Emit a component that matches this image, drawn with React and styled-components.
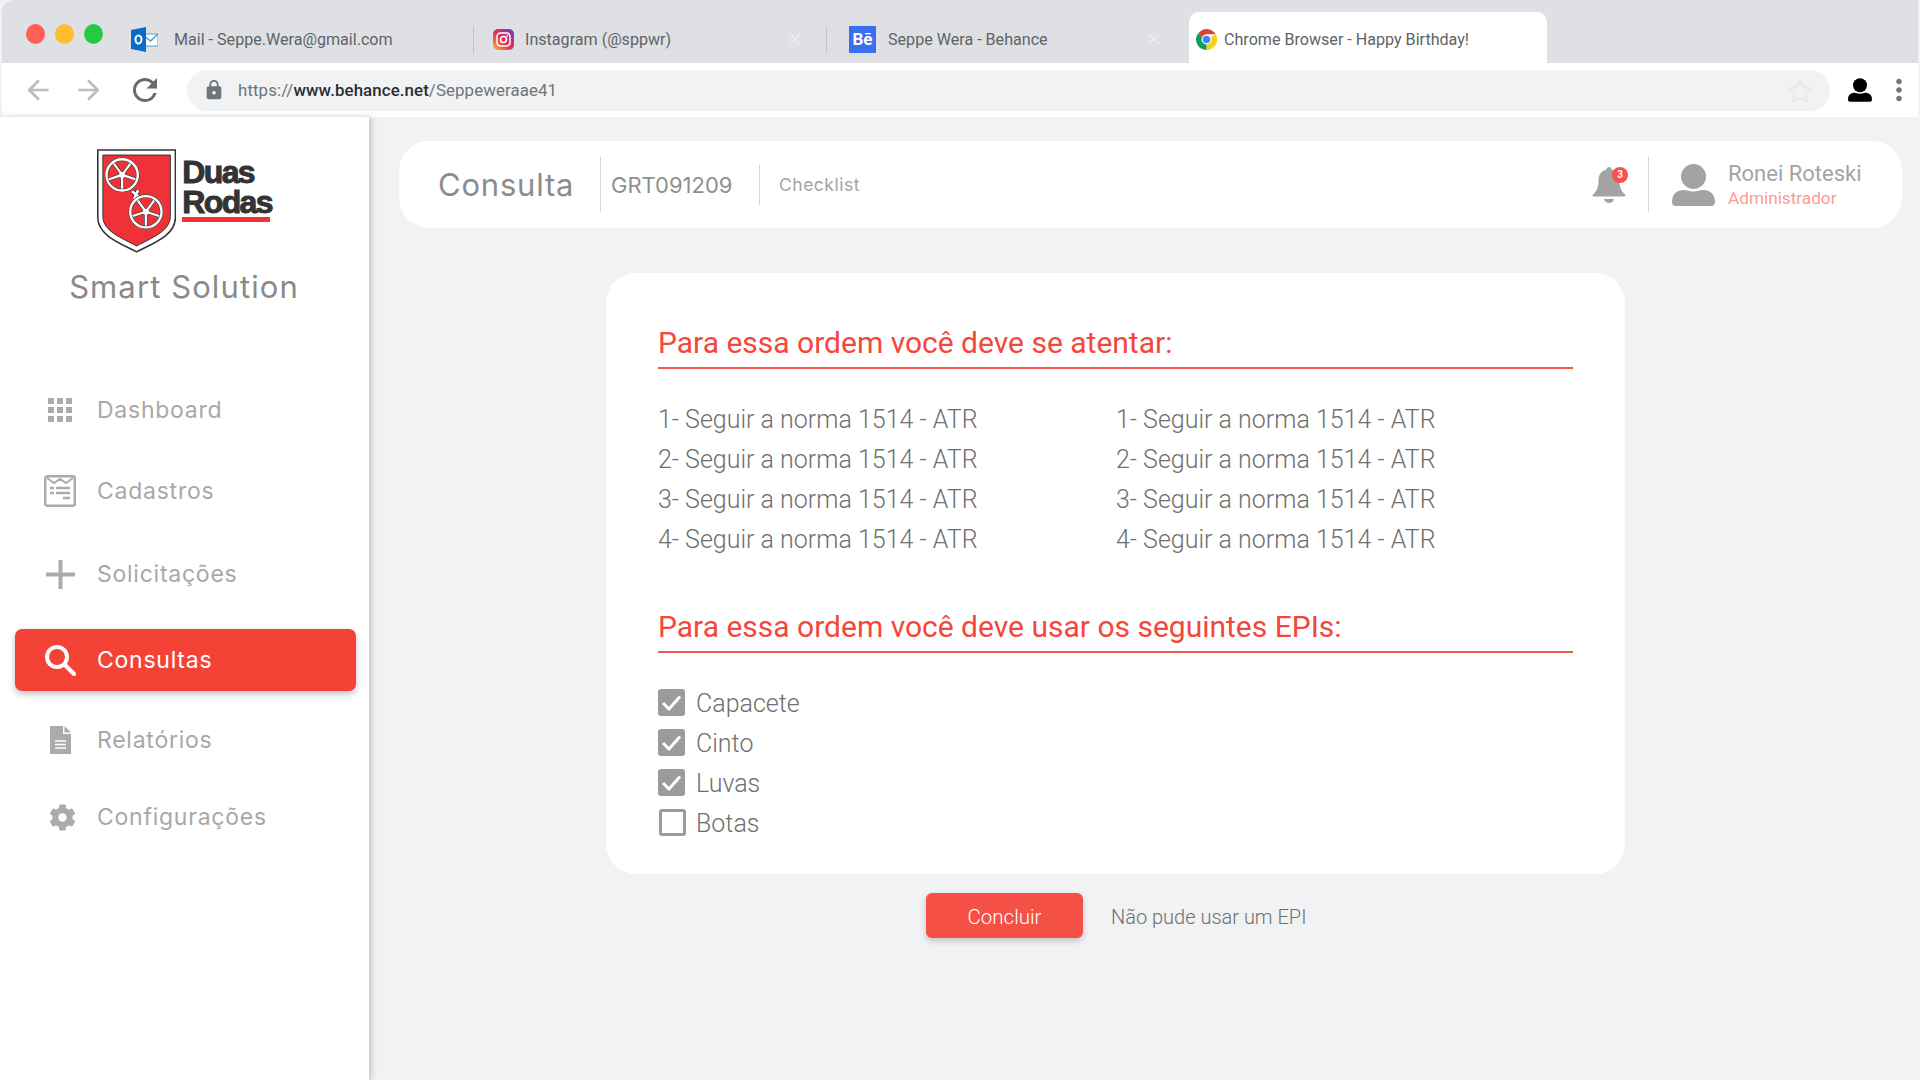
import React from "react";
import styled, { createGlobalStyle } from "styled-components";
import { MdArrowBack, MdArrowForward, MdRefresh, MdLock, MdClose, MdMoreVert } from "react-icons/md";
import { FaCog } from "react-icons/fa";

const Global = createGlobalStyle`
  html, body { margin: 0; padding: 0; background: #fff; }
  body { font-family: Roboto, "Liberation Sans", sans-serif; }
  * { box-sizing: border-box; }
`;

const Page = styled.div`
  width: 1920px; height: 1080px; display: flex; flex-direction: column; overflow: hidden; background: #f1f2f4;
`;
const TabBar = styled.div`
  height: 63px; margin: 0 2px 0 2px; background: #dfe0e4; border-radius: 12px 0 0 0;
  display: flex; align-items: flex-end; flex: none; position: relative;
`;
const Lights = styled.div`
  display: flex; align-self: flex-start; gap: 10px; padding: 24px 0 0 24px; width: 129px; flex: none;
`;
const Light = styled.span`
  width: ${p => p.$w}px; height: 20px; border-radius: 50%; background: ${p => p.$c}; flex: none;
`;
const Tab = styled.div`
  height: 51px; width: ${p => p.$w}px; flex: none; display: flex; align-items: center; padding: 3px 0 0 ${p => p.$pl}px; gap: ${p => p.$gap}px;
  font-size: 16.1px; color: #5f6368; position: relative; white-space: nowrap;
  svg { flex: none; }
  ${p => p.$active ? "background:#fff;border-radius:10px 10px 0 0;" : ""}
  ${p => p.$sep ? "&::after{content:'';position:absolute;right:-1px;top:14px;height:28px;width:1.5px;background:#c4c5c9;}" : ""}
`;
const TabTitle = styled.span`
  flex: ${p => p.$grow ? 1 : "none"};
`;
const CloseIcon = styled(MdClose)`
  color: #eceded; font-size: 20px; margin-right: ${p => p.$mr}px;
`;
const Toolbar = styled.div`
  height: 54px; margin: 0 2px; background: #fff; flex: none; display: flex; align-items: center; padding: 0 0 0 20px; color: #bdbdbd;
`;
const NavBtn = styled.span`
  display: flex; align-items: center; justify-content: center; width: ${p => p.$w}px; height: 40px; font-size: ${p => p.$s}px; color: ${p => p.$c}; flex: none;
  margin: 0 ${p => p.$mr || 0}px 0 ${p => p.$ml || 0}px;
`;
const Address = styled.div`
  width: 1643px; height: 41px; border-radius: 21px; background: #f1f2f4; display: flex; align-items: center; padding: 0 17px 0 17px; flex: none; margin-left: 24px;
  svg { flex: none; }
`;
const Url = styled.div`
  flex: 1; margin-left: 14px; font-size: 16.85px; color: #6f7478; letter-spacing: .1px;
  b { font-weight: 500; color: #2b2d30; }
`;
const Body = styled.div`
  flex: 1; display: flex; min-height: 0;
`;
const Sidebar = styled.aside`
  width: 369px; flex: none; background: #fff; box-shadow: 2px 0 6px rgba(60,60,70,.28); display: flex; flex-direction: column; z-index: 1;
`;
const Brand = styled.div`
  display: flex; flex-direction: column; align-items: center; padding-top: 31px;
`;
const LogoRow = styled.div`
  display: flex; gap: 6px; width: 175px;
`;
const LogoWords = styled.div`
  display: flex; flex-direction: column; padding-top: 9px; font-family: "Liberation Sans", sans-serif; font-weight: 700; color: #333234; font-size: 32px; line-height: 30px; letter-spacing: -1.6px; -webkit-text-stroke: 1px #333234;
`;
const LogoWord = styled.div`
  height: 30px; overflow: visible;
`;
const LogoBar = styled.span`
  width: 88px; height: 5px; background: #f03237; display: block;
`;
const BrandName = styled.div`
  font-family: Inter, sans-serif; color: #8a8a8a; font-size: 31px; letter-spacing: 1.1px; margin-top: 14px; margin-left: -1px;
`;
const Nav = styled.nav`
  display: flex; flex-direction: column; margin-top: 74px; padding: 0 13px 0 15px;
`;
const NavItem = styled.a`
  height: 62px; display: flex; align-items: center; border-radius: 7px; margin-top: ${p => p.$mt}px;
  font-family: Inter, sans-serif; font-size: 23px; letter-spacing: .75px; color: ${p => p.$active ? "#fff" : "#a8a8a8"};
  background: ${p => p.$active ? "#f44336" : "transparent"};
  box-shadow: ${p => p.$active ? "0 3px 6px rgba(0,0,0,.25)" : "none"};
`;
const NavIcon = styled.span`
  width: 82px; flex: none; display: flex; justify-content: center; padding-left: ${p => p.$pl}px; color: #ababab;
`;
const Content = styled.main`
  flex: 1; display: flex; flex-direction: column; align-items: flex-start; padding: 24px 18px 0 30px;
`;
const Header = styled.header`
  width: 100%; height: 87px; background: #fff; border-radius: 30px; display: flex; align-items: center; flex: none;
`;
const Title = styled.h1`
  margin: 0 0 0 39px; width: 162px; font: 400 31px Inter, sans-serif; letter-spacing: .8px; color: #8c8c8c; flex: none;
`;
const VLine = styled.span`
  width: 1px; height: ${p => p.$h}px; background: #d6d6d6; flex: none;
`;
const Code = styled.div`
  width: 158px; padding-left: 10px; font: 400 22px Inter, sans-serif; color: #8f8f8f; flex: none;
`;
const Sub = styled.div`
  padding-left: 19px; font: 400 17.5px Inter, sans-serif; letter-spacing: .5px; color: #a3a3a3; flex: 1;
`;
const BellWrap = styled.div`
  position: relative; width: 34px; height: 40px; flex: none; margin-right: 22px;
`;
const Badge = styled.span`
  position: absolute; right: -2px; top: 2px; width: 16px; height: 16px; border-radius: 50%; background: #f9504f; color: #fff; font: 700 10px/16px Roboto, sans-serif; text-align: center;
`;
const User = styled.div`
  display: flex; align-items: center; width: 253px; flex: none; padding-left: 23px; gap: 13px;
`;
const UserText = styled.div`
  display: flex; flex-direction: column;
`;
const UserName = styled.div`
  font-size: 22px; line-height: 28px; color: #a4a4a4;
`;
const UserRole = styled.div`
  font-size: 17.2px; line-height: 21px; color: #fd9a9a;
`;
const Card = styled.section`
  margin: 45px 0 0 207px; width: 1019px; height: 601px; background: #fff; border-radius: 30px; flex: none; padding: 50px 52px 0;
`;
const Heading = styled.h2`
  margin: ${p => p.$mt}px 0 0; height: 46px; font: 400 30px/40px Roboto, sans-serif; color: #f4473b; border-bottom: 2px solid #f2594e;
`;
const Columns = styled.div`
  display: grid; grid-template-columns: 458px 1fr; margin-top: 31px;
`;
const Rule = styled.div`
  font: 300 25px/40px Roboto, sans-serif; color: #6f6f6f;
`;
const Checks = styled.div`
  display: flex; flex-direction: column; margin-top: 31px;
`;
const Check = styled.label`
  display: flex; align-items: center; height: 40px; font: 300 25px/40px Roboto, sans-serif; color: #6f6f6f; gap: ${p => p.$on ? 11 : 10}px;
`;
const Box = styled.span`
  width: 27px; height: 27px; flex: none; border-radius: 3px; display: flex; align-items: center; justify-content: center; margin: -3px 0 0 ${p => p.$on ? 0 : 1}px;
  background: ${p => p.$on ? "#9b9b9b" : "#fff"}; border: ${p => p.$on ? "none" : "3px solid #9b9b9b"};
`;
const Actions = styled.div`
  display: flex; align-items: center; margin: 19px 0 0 527px; gap: 28px; flex: none;
`;
const Primary = styled.button`
  width: 157px; height: 45px; border: none; border-radius: 6px; background: #f55045; color: #fff; font: 300 20.5px Roboto, sans-serif; padding: 2px 0 0; box-shadow: 0 3px 6px rgba(0,0,0,.2);
`;
const Ghost = styled.span`
  font: 300 20px Roboto, sans-serif; color: #6f6f6f; padding-top: 2px;
`;
const BeBadge = styled.span`
  width: 27px; height: 27px; background: #3a6ff0; color: #fff; font: 700 17px/27px Roboto, sans-serif; text-align: center; flex: none;
`;

const Person = ({ w, h, c }) => (
  <svg width={w} height={h} viewBox="0 0 43 42"><circle cx="21.5" cy="12.5" r="12.5" fill={c} /><path d="M0 38c0-8 5-12 12-12 3 0 5 1.600 9.500 1.600S28 26 31 26c7 0 12 4 12 12 0 2.500-1.500 4-4 4H4c-2.500 0-4-1.500-4-4z" fill={c} /></svg>
);
const spokes = [36, 108, 180, 252, 324];
const Shield = () => (
  <svg width="81" height="106" viewBox="0 0 81 106">
    <path d="M0.800 0.800H80.200V70C80.200 88 58 96 40.500 105 23 96 .8 88 .8 70Z" fill="#fff" stroke="#333" strokeWidth="1.600" />
    <path d="M6 6H75V69C75 84 55 91 40.500 99 26 91 6 84 6 69Z" fill="#ee3237" stroke="#333" strokeWidth="1" />
    <path d="M36 43l8 7M42 42l-4 9" stroke="#333" strokeWidth="4.500" />
    <path d="M36 43l8 7M42 42l-4 9" stroke="#fff" strokeWidth="2.800" />
    {[[25.7, 26.3], [50, 64]].map(([x, y]) => (
      <g key={x} fill="none">
        {spokes.map(a => (
          <line key={a} x1={x} y1={y} x2={x + 15 * Math.sin(a * Math.PI / 180)} y2={y - 15 * Math.cos(a * Math.PI / 180)} stroke="#444" strokeWidth="3.600" />
        ))}
        {spokes.map(a => (
          <line key={a} x1={x} y1={y} x2={x + 15 * Math.sin(a * Math.PI / 180)} y2={y - 15 * Math.cos(a * Math.PI / 180)} stroke="#fff" strokeWidth="2.200" />
        ))}
        <circle cx={x} cy={y} r="16" stroke="#444" strokeWidth="3.600" />
        <circle cx={x} cy={y} r="16" stroke="#fff" strokeWidth="2.400" />
        <circle cx={x} cy={y} r="3" fill="#fff" />
      </g>
    ))}
  </svg>
);
const GridIcon = () => (
  <svg width="24" height="24" viewBox="0 0 24 24" fill="#ababab">
    {[0, 9, 18].flatMap(y => [0, 9, 18].map(x => <rect key={`${x}${y}`} x={x} y={y} width="6" height="6" />))}
  </svg>
);
const FormIcon = () => (
  <svg width="32" height="32" viewBox="0 0 32 32" fill="none" stroke="#ababab">
    <rect x="1.200" y="1.200" width="29.600" height="29.600" rx="2" strokeWidth="2.400" />
    <path d="M3 3l7 5 6-4 6 4 7-5" strokeWidth="2" />
    <path d="M6 13h4M12 13h14M6 18h4M12 18h14M19 23h7" strokeWidth="2.400" />
  </svg>
);
const PlusIcon = () => (
  <svg width="29" height="29" viewBox="0 0 29 29"><path d="M0 12.500h29v4H0zM12.500 0h4v29h-4z" fill="#ababab" /></svg>
);
const SearchIcon = () => (
  <svg width="31" height="31" viewBox="0 0 31 31" fill="none" stroke="#fff" strokeLinecap="round">
    <circle cx="12" cy="12" r="10" strokeWidth="4" /><path d="M20 20l9 9" strokeWidth="4.200" />
  </svg>
);
const DocIcon = () => (
  <svg width="21" height="28" viewBox="0 0 21 28">
    <path d="M0 0H13V8H21V28H0Z" fill="#ababab" />
    <path d="M14.500 0L21 6.500H14.500Z" fill="#ababab" />
    <path d="M5 15h11M5 18.500h11M5 22h11" stroke="#fff" strokeWidth="1.300" />
  </svg>
);
const BellIcon = () => (
  <svg width="34" height="40" viewBox="0 0 34 40" fill="#a3a3a3">
    <path d="M14.500 4.500C14.500 3 15.500 2 17 2s2.500 1 2.500 2.500C25 6 27.500 10 27.500 16c0 6 1.500 10 5.500 13.500 1 1 .5 2-1 2H2c-1.500 0-2-1-1-2C5 26 6.500 22 6.500 16c0-6 2.500-10 8-11.500z" />
    <path d="M12 34h10c-.5 2.500-2.500 4-5 4s-4.500-1.500-5-4z" />
  </svg>
);
const Tick = () => (
  <svg width="21" height="17" viewBox="0 0 21 17" fill="none"><path d="M2 9l6 6L19 2.500" stroke="#fff" strokeWidth="3" /></svg>
);
const Outlook = () => (
  <svg width="27" height="25" viewBox="0 0 27 25">
    <rect x="12" y="7" width="15" height="12" fill="#fff" stroke="#4aa0dc" />
    <path d="M12 8l7.500 6L27 7" fill="none" stroke="#4aa0dc" strokeWidth="1.500" />
    <path d="M0 3L15 0V25L0 22Z" fill="#0a6cc2" />
    <ellipse cx="7.500" cy="12.500" rx="3" ry="4" fill="none" stroke="#fff" strokeWidth="2" />
  </svg>
);
const Insta = () => (
  <svg width="21" height="21" viewBox="0 0 21 21">
    <defs><linearGradient id="ig" x1="0" y1="1" x2="1" y2="0"><stop offset="0" stopColor="#fdb444" /><stop offset=".45" stopColor="#e8304f" /><stop offset="1" stopColor="#6a3cd0" /></linearGradient></defs>
    <rect width="21" height="21" rx="5" fill="url(#ig)" />
    <rect x="4" y="4" width="13" height="13" rx="3.500" fill="none" stroke="#fff" strokeWidth="1.500" />
    <circle cx="10.500" cy="10.500" r="3" fill="none" stroke="#fff" strokeWidth="1.500" />
    <circle cx="14.300" cy="6.700" r=".9" fill="#fff" />
  </svg>
);
const ChromeIcon = () => (
  <svg width="21" height="21" viewBox="0 0 21 21">
    <path d="M10.500 10.500L2 4.500A10.500 10.500 0 0 1 19.600 5.200H10.500Z" fill="#db4437" />
    <path d="M10.500 10.500L19.600 5.200A10.500 10.500 0 0 1 10.500 21Z" fill="#fbd117" />
    <path d="M10.500 10.500L10.500 21A10.500 10.500 0 0 1 2 4.500Z" fill="#0f9d58" />
    <circle cx="10.500" cy="10.500" r="5" fill="#fff" /><circle cx="10.500" cy="10.500" r="3.800" fill="#4285f4" />
  </svg>
);
const Star = () => (
  <svg width="26" height="25" viewBox="0 0 26 25" fill="none"><path d="M13 2l3.300 7.400 8 .9-6 5.400 1.700 7.900L13 19.600 6 23.600l1.700-7.900-6-5.400 8-.9z" stroke="#e6e7ea" strokeWidth="2" /></svg>
);

const navItems = [
  { label: "Dashboard", icon: <GridIcon />, mt: 0, pl: 8 },
  { label: "Cadastros", icon: <FormIcon />, mt: 19, pl: 8 },
  { label: "Solicitações", icon: <PlusIcon />, mt: 21, pl: 8 },
  { label: "Consultas", icon: <SearchIcon />, mt: 24, active: true, pl: 8 },
  { label: "Relatórios", icon: <DocIcon />, mt: 18, pl: 8 },
  { label: "Configurações", icon: <FaCog size={27} />, mt: 15, pl: 12 },
];
const rules = ["1- Seguir a norma 1514 - ATR", "2- Seguir a norma 1514 - ATR", "3- Seguir a norma 1514 - ATR", "4- Seguir a norma 1514 - ATR"];
const epis = [["Capacete", true], ["Cinto", true], ["Luvas", true], ["Botas", false]];

export default function App() {
  return (
    <Page>
      <Global />
      <TabBar>
        <Lights>
          <Light $w={19} $c="#ff5f57" />
          <Light $w={19} $c="#ffbc2e" />
          <Light $w={19} $c="#28c840" />
        </Lights>
        <Tab $w={342} $pl={0} $gap={16} $sep><Outlook /><TabTitle>Mail - Seppe.Wera@gmail.com</TabTitle></Tab>
        <Tab $w={353} $pl={20} $gap={11} $sep><Insta /><TabTitle $grow>Instagram (@sppwr)</TabTitle><CloseIcon $mr={21} /></Tab>
        <Tab $w={363} $pl={23} $gap={12}><BeBadge>Bē</BeBadge><TabTitle $grow>Seppe Wera - Behance</TabTitle><CloseIcon $mr={25} /></Tab>
        <Tab $w={358} $pl={7} $gap={7} $active><ChromeIcon /><TabTitle>Chrome Browser - Happy Birthday!</TabTitle></Tab>
      </TabBar>
      <Toolbar>
        <NavBtn $w={32} $s={32} $c="#bdbdbd" $mr={19}><MdArrowBack /></NavBtn>
        <NavBtn $w={32} $s={32} $c="#bdbdbd" $mr={22}><MdArrowForward /></NavBtn>
        <NavBtn $w={36} $s={36} $c="#6a6a6a"><MdRefresh /></NavBtn>
        <Address>
          <NavBtn $w={20} $s={22} $c="#70757a"><MdLock /></NavBtn>
          <Url>https://<b>www.behance.net</b>/Seppeweraae41</Url>
          <Star />
        </Address>
        <NavBtn $w={24} $s={24} $c="#000" $ml={18}><Person w={24} h={24} c="#000" /></NavBtn>
        <NavBtn $w={34} $s={34} $c="#757575" $ml={10}><MdMoreVert /></NavBtn>
      </Toolbar>
      <Body>
        <Sidebar>
          <Brand>
            <LogoRow>
              <Shield />
              <LogoWords>
                <LogoWord>Duas</LogoWord>
                <LogoWord>Rodas</LogoWord>
                <LogoBar />
              </LogoWords>
            </LogoRow>
            <BrandName>Smart Solution</BrandName>
          </Brand>
          <Nav>
            {navItems.map(n => (
              <NavItem key={n.label} $mt={n.mt} $active={n.active}>
                <NavIcon $pl={n.pl}>{n.icon}</NavIcon>
                {n.label}
              </NavItem>
            ))}
          </Nav>
        </Sidebar>
        <Content>
          <Header>
            <Title>Consulta</Title>
            <VLine $h={55} />
            <Code>GRT091209</Code>
            <VLine $h={40} />
            <Sub>Checklist</Sub>
            <BellWrap><BellIcon /><Badge>3</Badge></BellWrap>
            <VLine $h={55} />
            <User>
              <Person w={43} h={42} c="#a3a3a3" />
              <UserText>
                <UserName>Ronei Roteski</UserName>
                <UserRole>Administrador</UserRole>
              </UserText>
            </User>
          </Header>
          <Card>
            <Heading $mt={0}>Para essa ordem você deve se atentar:</Heading>
            <Columns>
              <div>{rules.map(r => <Rule key={r}>{r}</Rule>)}</div>
              <div>{rules.map(r => <Rule key={r}>{r}</Rule>)}</div>
            </Columns>
            <Heading $mt={47}>Para essa ordem você deve usar os seguintes EPIs:</Heading>
            <Checks>
              {epis.map(([l, on]) => (
                <Check key={l} $on={on}><Box $on={on}>{on && <Tick />}</Box>{l}</Check>
              ))}
            </Checks>
          </Card>
          <Actions>
            <Primary>Concluir</Primary>
            <Ghost>Não pude usar um EPI</Ghost>
          </Actions>
        </Content>
      </Body>
    </Page>
  );
}
